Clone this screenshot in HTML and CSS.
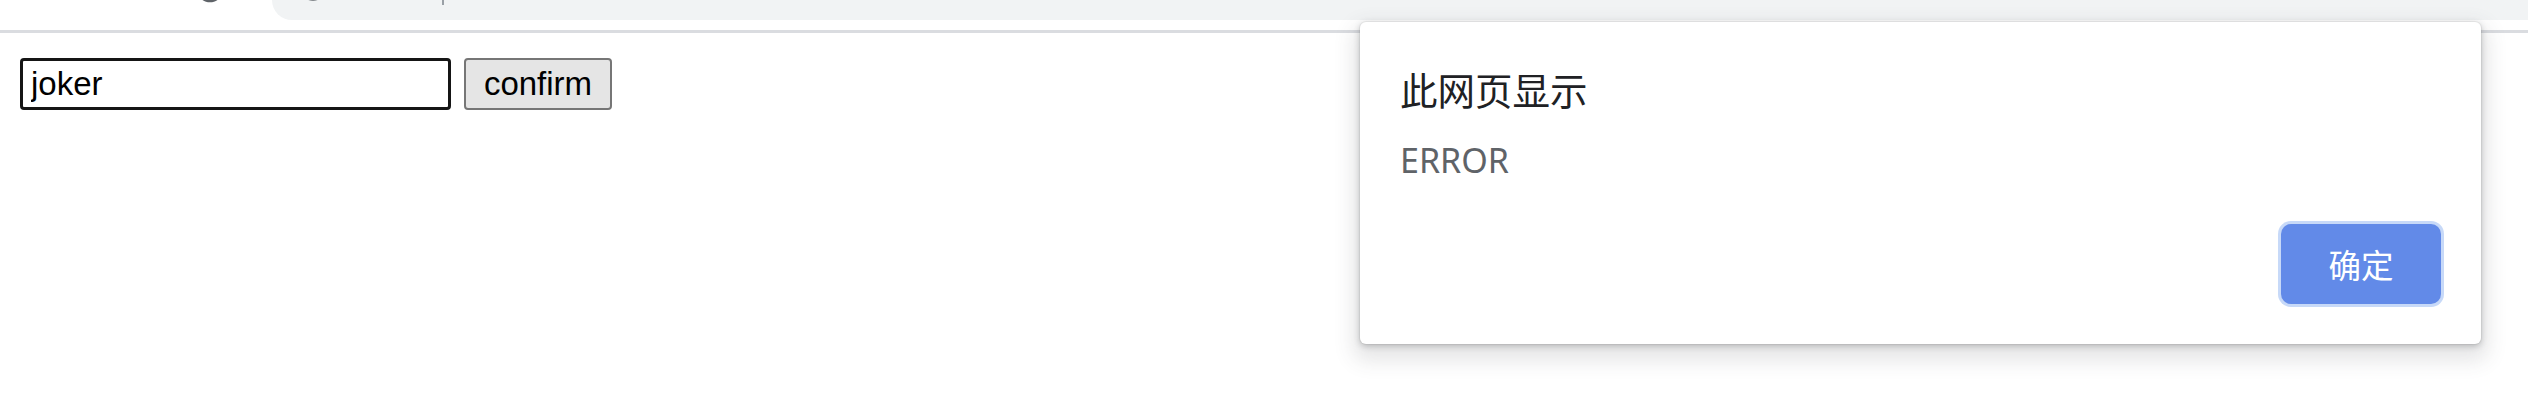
FILE: index.html
```html
<!DOCTYPE html>
<html lang="zh-CN">
<head>
<meta charset="utf-8">
<title>joker</title>
<link rel="stylesheet" href="styles.css">
</head>
<body>
<div class="toolbar">
  <div class="nav">
    <svg class="reload" viewBox="0 0 24 24" aria-hidden="true"><path fill="currentColor" d="M17.65 6.35A7.958 7.958 0 0 0 12 4c-4.42 0-7.99 3.58-7.99 8s3.57 8 7.99 8c3.73 0 6.84-2.55 7.73-6h-2.08A5.99 5.99 0 0 1 12 18c-3.31 0-6-2.690-6-6s2.69-6 6-6c1.66 0 3.14.69 4.22 1.78L13 11h7V4l-2.35 2.35z"/></svg>
  </div>
  <div class="omnibox">
    <svg class="info-icon" viewBox="0 0 24 24" aria-hidden="true"><path fill="currentColor" d="M11 7h2v2h-2zm0 4h2v6h-2zm1-9C6.48 2 2 6.480 2 12s4.48 10 10 10 10-4.48 10-10S17.52 2 12 2zm0 18c-4.41 0-8-3.59-8-8s3.59-8 8-8 8 3.59 8 8-3.59 8-8 8z"/></svg>
    <span class="sep"></span>
  </div>
</div>
<div class="divider"></div>
<main class="page">
  <form class="row">
    <input class="name-input" type="text" value="joker">
    <button class="confirm" type="button">confirm</button>
  </form>
</main>
<div class="alert" role="dialog">
  <div class="alert-title">此网页显示</div>
  <div class="alert-message">ERROR</div>
  <div class="alert-actions"><button class="alert-ok" type="button">确定</button></div>
</div>
</body>
</html>
```
FILE: styles.css
```css
html, body {
  margin: 0;
  padding: 0;
  background: #ffffff;
}
body {
  width: 2528px;
  height: 417px;
  overflow: hidden;
  position: relative;
  font-family: "Liberation Sans", Arial, sans-serif;
}

/* browser toolbar remnant */
.toolbar {
  display: flex;
  height: 30px;
  overflow: hidden;
  background: #ffffff;
}
.nav {
  width: 272px;
  flex: none;
  padding-left: 190px;
  box-sizing: border-box;
  color: #5f6368;
}
.reload {
  display: block;
  width: 40px;
  height: 40px;
  margin-top: -31px;
}
.omnibox {
  flex: 1;
  height: 20px;
  background: #f1f3f4;
  border-bottom-left-radius: 34px;
  display: flex;
  align-items: flex-start;
  overflow: hidden;
  padding-left: 21px;
}
.info-icon {
  flex: none;
  width: 40px;
  height: 40px;
  margin-top: -36px;
  color: #5f6368;
}
.sep {
  flex: none;
  width: 2px;
  height: 30px;
  margin-top: -25px;
  margin-left: 109px;
  background: #9aa0a6;
}
.divider {
  height: 3px;
  background: #dadce0;
}

/* page content */
.page {
  padding: 25px 0 0 20px;
}
.row {
  display: flex;
  align-items: center;
  gap: 13px;
  margin: 0;
}
.name-input {
  box-sizing: border-box;
  width: 431px;
  height: 52px;
  margin: 0;
  padding: 0 8px;
  border: 3px solid #151515;
  border-radius: 4px;
  background: #ffffff;
  font-family: "Liberation Sans", Arial, sans-serif;
  font-size: 33px;
  color: #000000;
  outline: none;
}
.confirm {
  box-sizing: border-box;
  width: 148px;
  height: 52px;
  margin: 0;
  padding: 0;
  border: 2px solid #767676;
  border-radius: 4px;
  background: #e5e5e5;
  font-family: "Liberation Sans", Arial, sans-serif;
  font-size: 33px;
  color: #000000;
  text-align: center;
}

/* alert dialog overlay */
.alert {
  position: absolute;
  left: 1360px;
  top: 22px;
  width: 1121px;
  box-sizing: border-box;
  padding: 40px 40px 40px 40px;
  background: #ffffff;
  border-radius: 6px;
  box-shadow: 0 0 0 1px rgba(60, 64, 67, 0.06),
              0 2px 6px rgba(60, 64, 67, 0.3),
              0 10px 20px 7px rgba(60, 64, 67, 0.13);
}
.alert-title {
  font-family: "Noto Sans CJK SC", "Noto Sans", sans-serif;
  font-size: 37.5px;
  line-height: 54px;
  color: #202124;
}
.alert-message {
  margin-top: 20px;
  font-family: "Noto Sans", "Open Sans", sans-serif;
  font-size: 34px;
  line-height: 48px;
  color: #5f6368;
}
.alert-actions {
  display: flex;
  justify-content: flex-end;
  margin-top: 40px;
}
.alert-ok {
  width: 160px;
  height: 80px;
  margin: 0;
  padding: 0;
  border: none;
  border-radius: 10px;
  background: #628ae8;
  box-shadow: 0 0 0 3px #c7d9f8;
  color: #ffffff;
  font-family: "Noto Sans CJK SC", sans-serif;
  font-size: 32.5px;
  line-height: 80px;
  text-align: center;
}
```
